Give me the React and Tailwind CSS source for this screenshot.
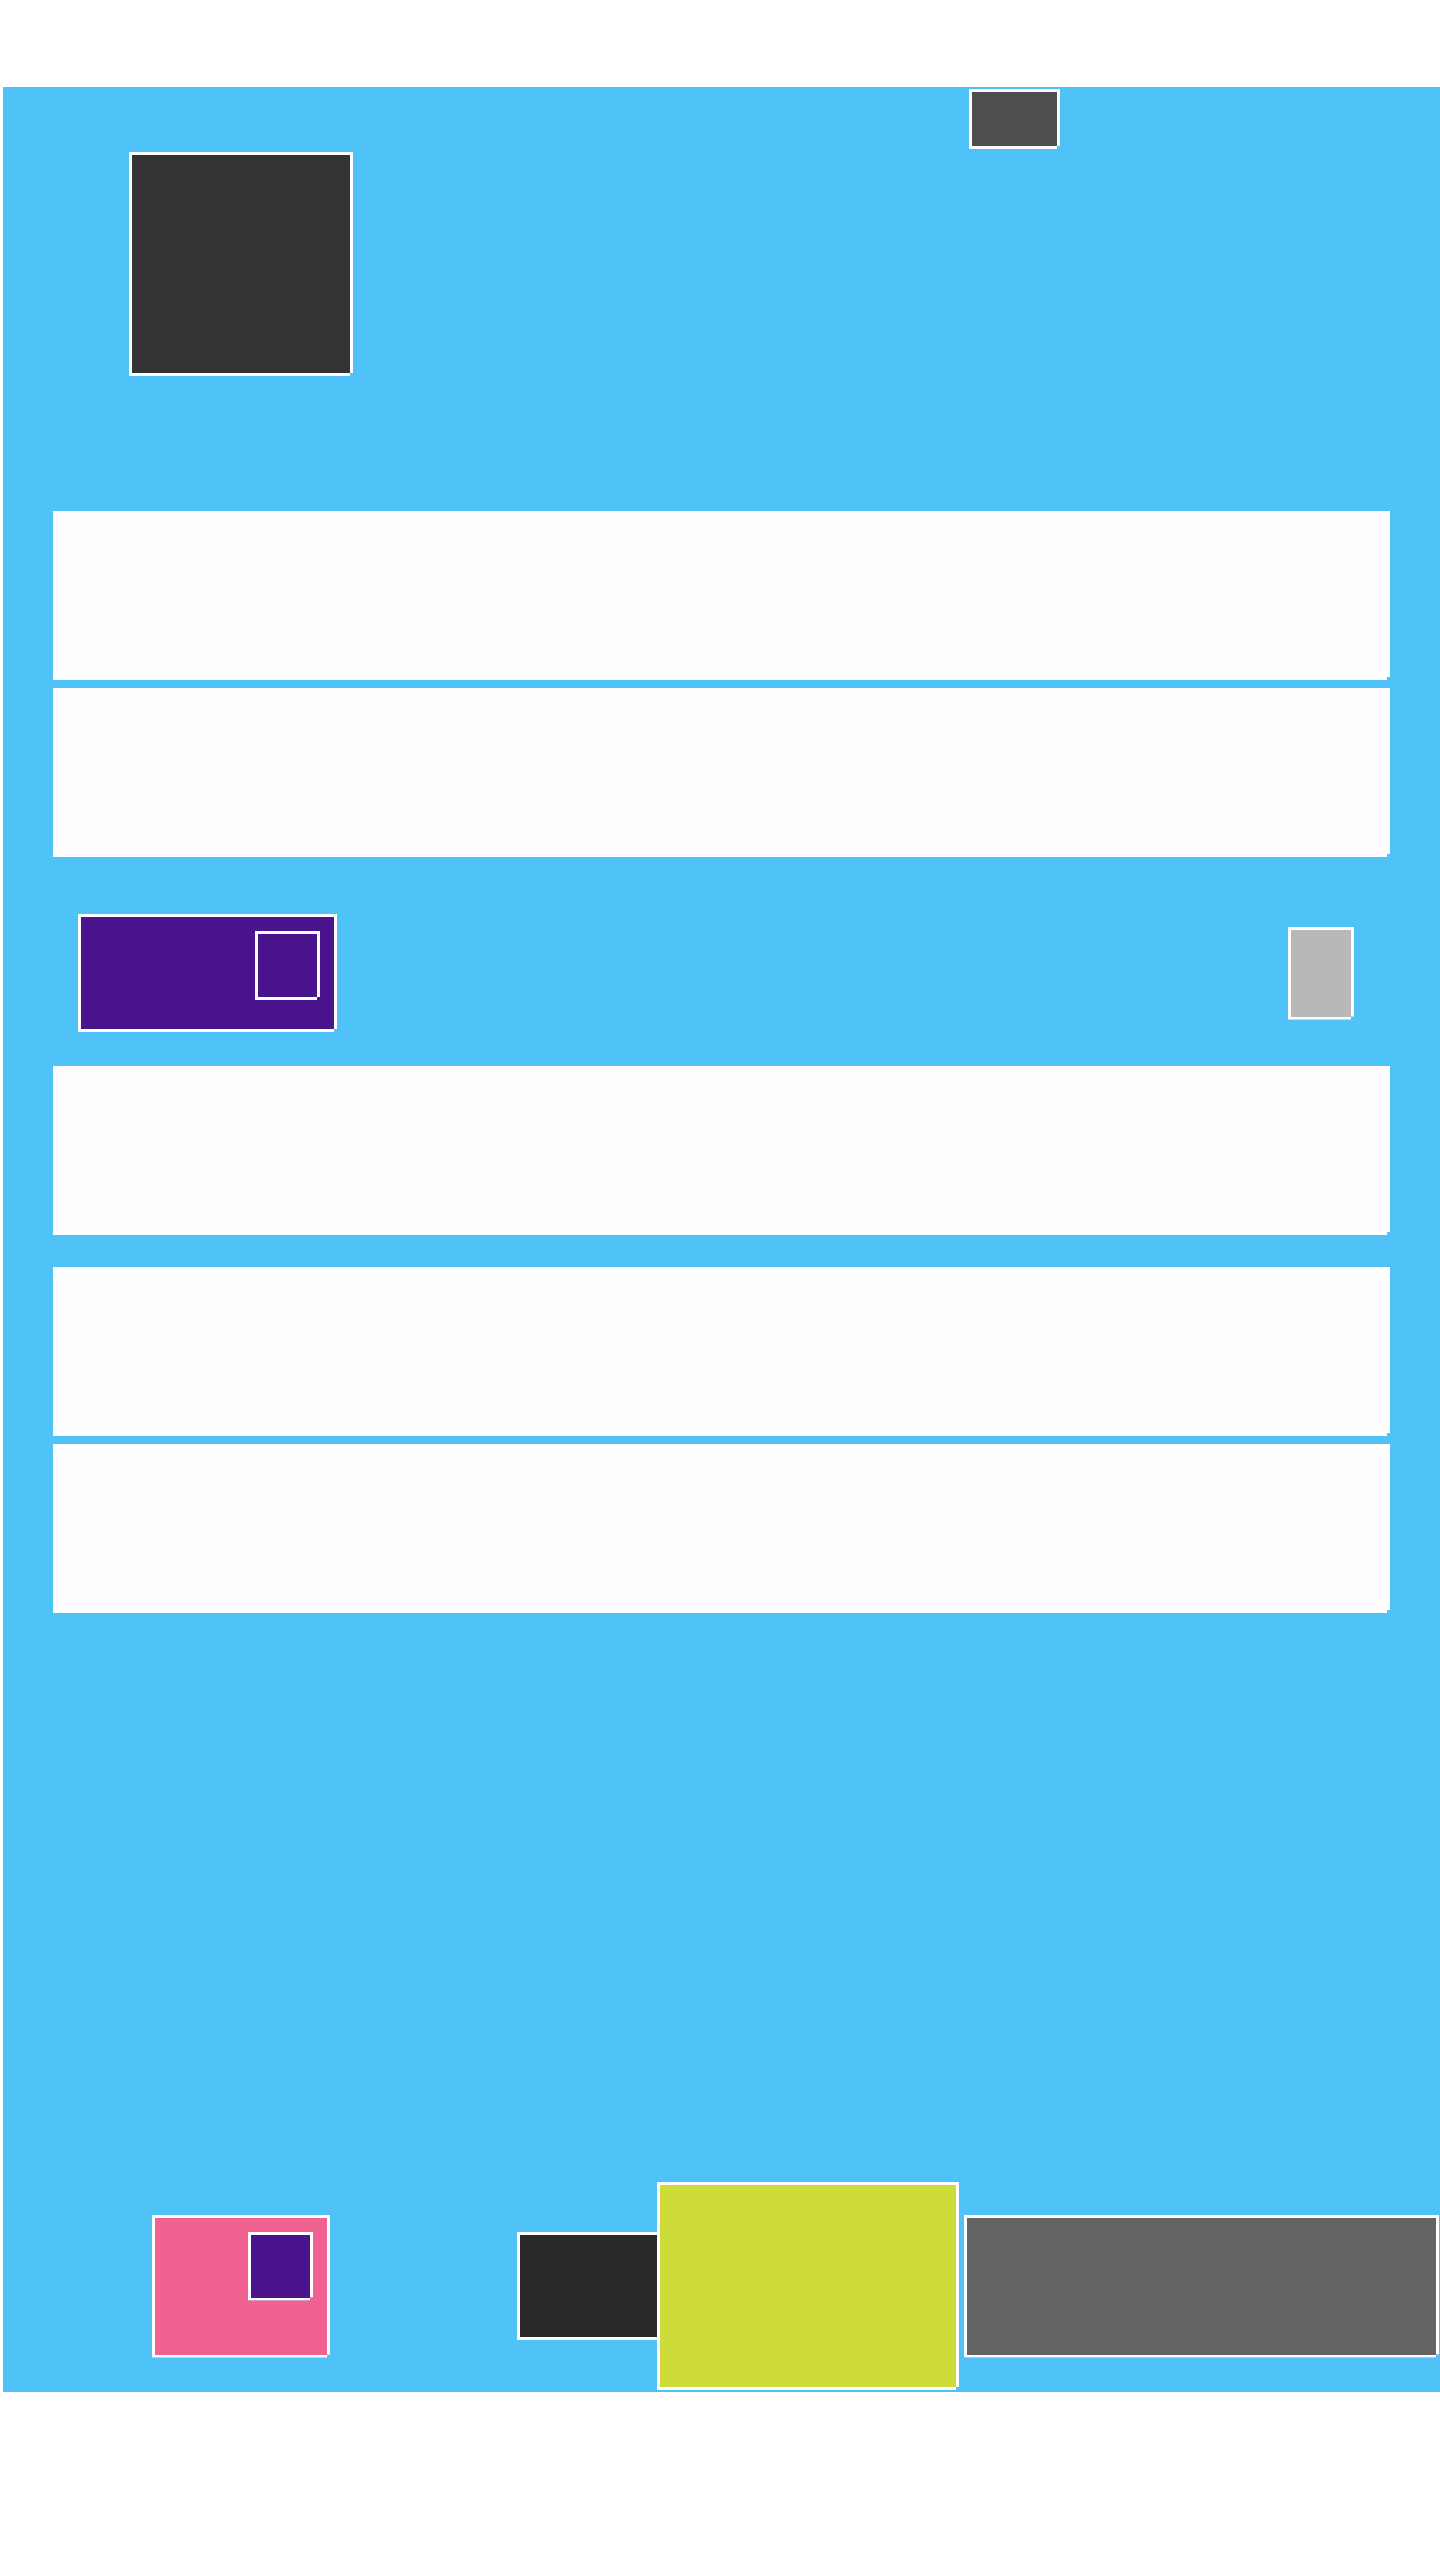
import React from 'react';

// every tile has a white 3px frame with the bottom-right corner bitten off
const notch =
  "[clip-path:polygon(0_0,100%_0,100%_calc(100%_-_3px),calc(100%_-_3px)_calc(100%_-_3px),calc(100%_-_3px)_100%,0_100%)]";

const Tile = ({ className = '', children }) => (
  <div className={`border-[3px] border-white ${notch} ${className}`}>{children}</div>
);

const Row = () => <Tile className="h-[169px] w-full bg-[#fefefe]" />;

const Chip = ({ color, className = '' }) => (
  <Tile className={`flex justify-end p-[14px] ${color} ${className}`}>
    <Tile className="h-[69px] w-[65px] bg-[#4a148c]" />
  </Tile>
);

const App = () => {
  return (
    <div className="min-h-[2560px] bg-white pt-[87px] pl-[3px] font-['Liberation_Sans',sans-serif]">
      <div className="flex h-[2305px] flex-col bg-[#4fc3f7]">
        {/* header */}
        <div className="flex items-start">
          <Tile className="ml-[126px] mt-[65px] h-[224px] w-[224px] bg-[#333333]" />
          <Tile className="ml-[616px] mt-[2px] h-[60px] w-[91px] bg-[#4f4f4f]" />
        </div>

        <div className="mt-[135px] flex flex-col gap-[8px] px-[50px]">
          <Row />
          <Row />
        </div>

        {/* toolbar */}
        <div className="mt-[57px] flex h-[118px] items-center justify-between pl-[75px] pr-[86px]">
          <Chip color="bg-[#4a148c]" className="h-[118px] w-[259px]" />
          <Tile className="h-[93px] w-[66px] bg-[#b8b8b8]" />
        </div>

        <div className="mt-[34px] px-[50px]">
          <Row />
        </div>
        <div className="mt-[32px] flex flex-col gap-[8px] px-[50px]">
          <Row />
          <Row />
        </div>

        {/* bottom bar */}
        <div className="mt-auto mb-[2px] flex h-[208px] items-center pl-[149px]">
          <Chip color="bg-[#f06292]" className="h-[143px] w-[178px]" />
          <div className="ml-[187px] h-[108px] w-[140px] border-y-[3px] border-l-[3px] border-white bg-[#292929]" />
          <Tile className="h-[208px] w-[302px] bg-[#cddc39]" />
          <Tile className="ml-[5px] h-[143px] w-[475px] bg-[#646464]" />
        </div>
      </div>
    </div>
  );
};

export default App;
